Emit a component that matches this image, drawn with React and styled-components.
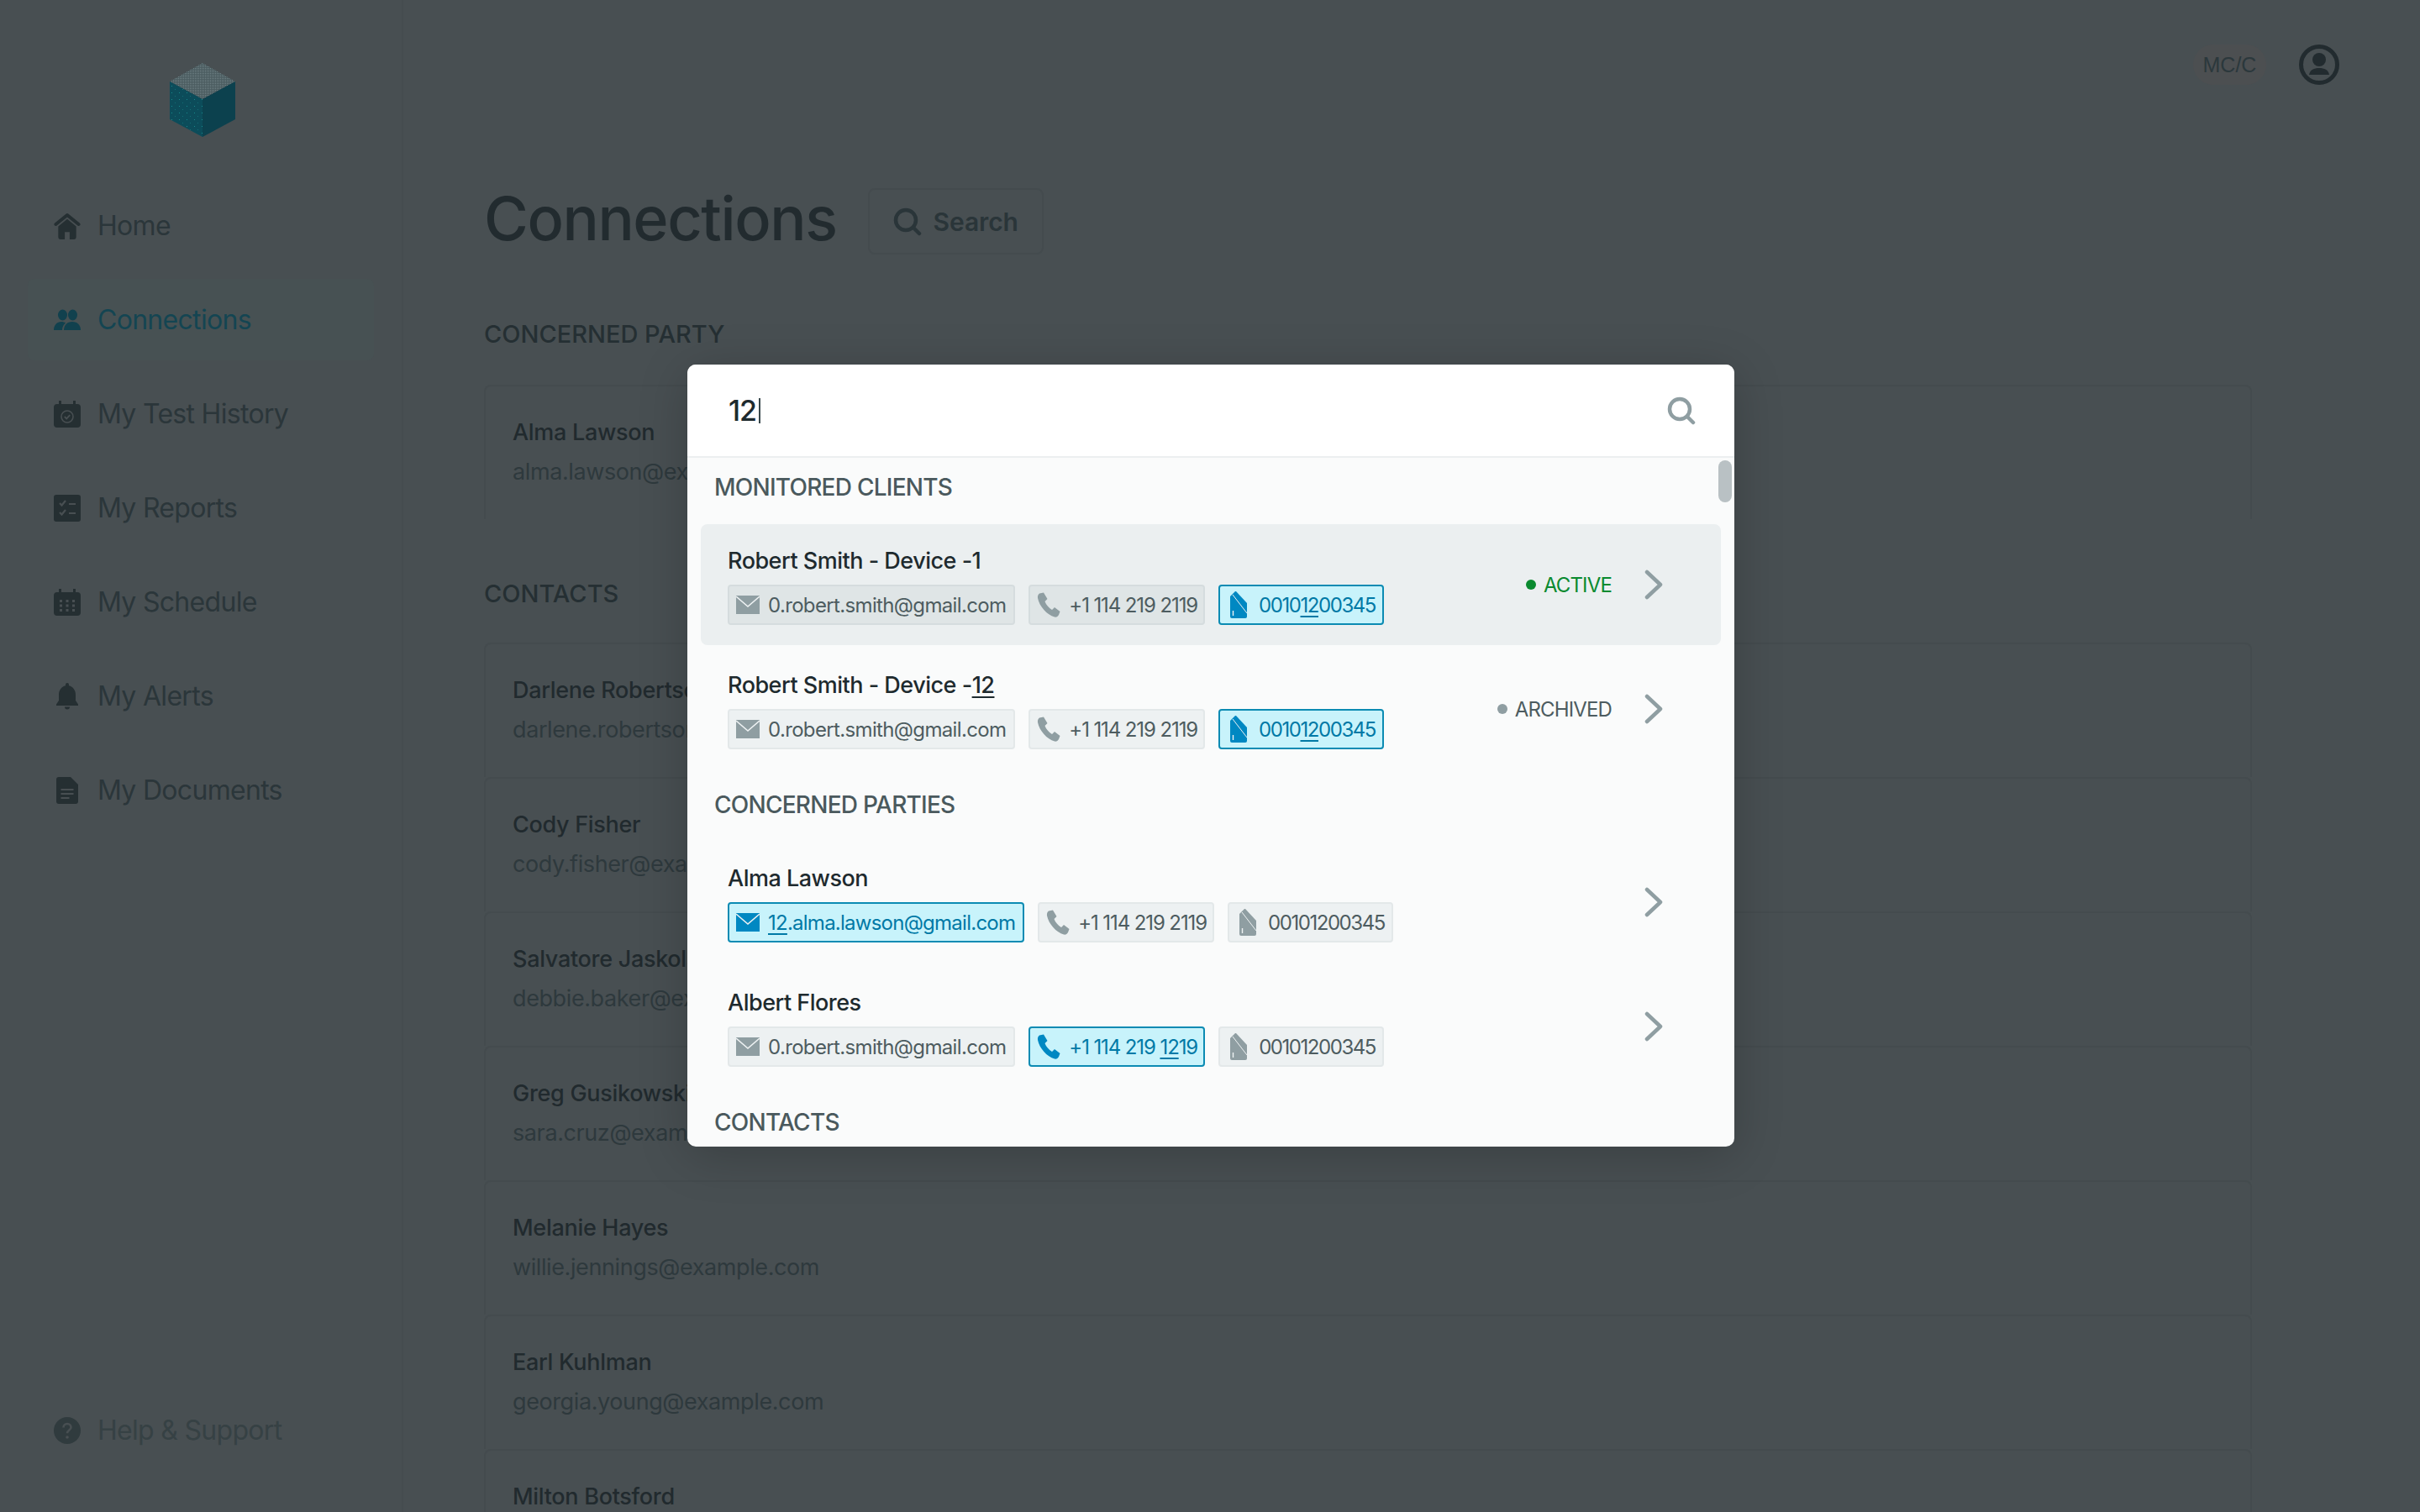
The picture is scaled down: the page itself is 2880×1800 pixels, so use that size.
import React from "react";
import styled, { createGlobalStyle } from "styled-components";

const BG = "#484f52";

const Global = createGlobalStyle`
  html, body { margin: 0; padding: 0; background: ${BG}; }
  * { box-sizing: border-box; }
`;

const Page = styled.div`
  position: relative;
  display: grid;
  grid-template-columns: 480px 1fr;
  grid-template-rows: 1800px;
  width: 2880px;
  height: 1800px;
  overflow: hidden;
  background: ${BG};
  color: #222b2f;
  font-family: Inter, "Liberation Sans", sans-serif;
`;

const Sidebar = styled.aside`
  display: flex;
  flex-direction: column;
  align-items: stretch;
  height: 1800px;
  padding: 75px 33px 49px;
  border-right: 2px solid #454c4f;
`;

const LogoWrap = styled.div`
  display: flex;
  justify-content: center;
  height: 88px;
  padding-left: 3px;
  margin-bottom: 57px;
`;

const Nav = styled.nav`
  display: flex;
  flex-direction: column;
  gap: 15px;
`;

const NavItem = styled.a`
  display: flex;
  align-items: center;
  gap: 20px;
  height: 97px;
  padding-left: 31px;
  border-radius: 8px;
  font-size: 32px;
  letter-spacing: -0.7px;
  color: ${(p) => (p.$active ? "#144552" : "#2b363a")};
  background: ${(p) => (p.$active ? "#475153" : "transparent")};
  svg { width: 32px; height: 32px; flex: none; color: ${(p) => (p.$active ? "#11414e" : "#252f32")}; }
`;

const Help = styled(NavItem)`
  margin-top: auto;
  color: #364144;
  svg { color: #303b3e; }
`;

const Main = styled.main`
  display: flex;
  flex-direction: column;
  min-width: 0;
  height: 1800px;
  overflow: hidden;
`;

const TopBar = styled.header`
  display: flex;
  justify-content: flex-end;
  align-items: center;
  gap: 39px;
  padding: 53px 96px 0 0;
`;

const Pill = styled.span`
  display: flex;
  align-items: center;
  justify-content: center;
  width: 87px;
  height: 48px;
  border-radius: 24px;
  background: #4c4f51;
  font-family: "Liberation Sans", sans-serif;
  font-size: 25px;
  color: #2b383c;
`;

const Content = styled.div`
  display: flex;
  flex-direction: column;
  padding: 123px 200px 0 96px;
`;

const TitleRow = styled.div`
  display: flex;
  align-items: center;
  gap: 37px;
  height: 79px;
  margin-bottom: 77px;
`;

const Title = styled.h1`
  margin: 0 0 8px;
  font-size: 72px;
  font-weight: 500;
  line-height: 79px;
  letter-spacing: -1.4px;
`;

const SearchButton = styled.button`
  display: flex;
  align-items: center;
  gap: 14px;
  height: 79px;
  padding: 0 28px;
  border: 2px solid #444b4e;
  border-radius: 8px;
  background: transparent;
  font: 600 30px Inter, sans-serif;
  letter-spacing: -0.1px;
  color: #2a3539;
  svg { width: 34px; height: 34px; }
`;

const SectionLabel = styled.h2`
  margin: 0 0 ${(p) => p.$after || 42}px;
  font-size: 29px;
  font-weight: 500;
  line-height: 36px;
  color: #252f33;
`;

const Cards = styled.div`
  display: flex;
  flex-direction: column;
  margin-bottom: ${(p) => p.$gap || 0}px;
`;

const Card = styled.div`
  flex: none;
  height: 160px;
  padding: 35px 32px 0;
  border: 2px solid #444b4e;
  border-bottom-width: 0;
  border-radius: 8px 8px 0 0;
`;

const CardName = styled.div`
  font-size: 27px;
  font-weight: 500;
  line-height: 40px;
  letter-spacing: -0.3px;
  color: #212a2e;
`;

const CardEmail = styled.div`
  margin-top: 7px;
  font-size: 27px;
  line-height: 40px;
  letter-spacing: -0.4px;
  color: #2e393d;
`;

const Modal = styled.section`
  position: absolute;
  left: 818px;
  top: 434px;
  width: 1246px;
  height: 931px;
  display: flex;
  flex-direction: column;
  overflow: hidden;
  border-radius: 10px;
  background: #fafbfb;
  box-shadow: 0 10px 60px rgba(0, 0, 0, 0.2);
`;

const SearchBar = styled.div`
  flex: none;
  display: flex;
  align-items: center;
  justify-content: space-between;
  height: 111px;
  padding: 0 46px 0 49px;
  background: #fff;
  border-bottom: 2px solid #eceff0;
`;

const InputText = styled.span`
  display: flex;
  align-items: center;
  gap: 3px;
  font-size: 34px;
  font-weight: 500;
  letter-spacing: -1px;
  color: #1e2a2e;
`;

const Caret = styled.i`
  display: block;
  width: 2px;
  height: 30px;
  background: #39484c;
`;

const Results = styled.div`
  position: relative;
  flex: 1;
  display: flex;
  flex-direction: column;
  padding: 0 16px;
  overflow: hidden;
`;

const Thumb = styled.div`
  position: absolute;
  top: 3px;
  right: 3px;
  width: 16px;
  height: 50px;
  border-radius: 8px;
  background: #b9c1c4;
`;

const Heading = styled.h3`
  margin: ${(p) => (p.$first ? 17 : 24)}px 0 26px;
  padding-left: 16px;
  font-size: 28px;
  font-weight: 500;
  line-height: 36px;
  letter-spacing: -0.75px;
  color: #4a595d;
`;

const Rows = styled.div`
  display: flex;
  flex-direction: column;
  gap: 4px;
`;

const Row = styled.div`
  flex: none;
  display: flex;
  align-items: center;
  height: 144px;
  padding: 0 68px 0 32px;
  border-radius: 8px;
  background: ${(p) => (p.$hover ? "#ebeff0" : "transparent")};
`;

const RowBody = styled.div`
  flex: 1;
  min-width: 0;
`;

const Name = styled.div`
  font-size: 27px;
  font-weight: 500;
  line-height: 40px;
  letter-spacing: -0.5px;
  color: #1e2a2e;
  u { text-underline-offset: 4px; }
`;

const Chips = styled.div`
  display: flex;
  gap: 16px;
  margin-top: 8px;
`;

const Chip = styled.span`
  display: flex;
  align-items: center;
  gap: 10px;
  height: 48px;
  padding: 0 9px 0 8px;
  border-radius: 4px;
  border: 2px solid ${(p) => (p.$hit ? "#0b8bb3" : p.$hover ? "#d5dcde" : "#e3e8e9")};
  background: ${(p) => (p.$hit ? "#c8f3fb" : p.$hover ? "#dfe5e6" : "#edf1f2")};
  color: ${(p) => (p.$hit ? "#0079a6" : "#4d5c60")};
  font-size: 24px;
  letter-spacing: ${(p) => (p.$hit ? "-0.75px" : "-0.65px")};
  white-space: nowrap;
  u { text-underline-offset: 4px; text-decoration-thickness: 1.5px; }
  svg { flex: none; color: ${(p) => (p.$hit ? "#0088c2" : "#8f9ea2")}; }
`;

const PhoneChip = styled(Chip)`
  gap: 10px;
  padding-right: 7px;
  letter-spacing: -1.1px;
`;

const SimChip = styled(Chip)`
  gap: 14px;
  padding-left: 12px;
  padding-right: 8px;
  letter-spacing: -1.45px;
`;

const Status = styled.span`
  display: flex;
  align-items: center;
  gap: 9px;
  margin-right: 38px;
  font-size: 24px;
  letter-spacing: -0.85px;
  color: ${(p) => (p.$active ? "#0a8a2f" : "#4d5c60")};
  &::before {
    content: "";
    width: 12px;
    height: 12px;
    border-radius: 50%;
    background: ${(p) => (p.$active ? "#0a8a2f" : "#8f9ea2")};
  }
`;

const Cube = () => (
  <svg width="78" height="88" viewBox="0 0 78 88">
    <defs>
      <pattern id="dotsL" width="9" height="8" patternUnits="userSpaceOnUse">
        <rect width="1" height="1" x="2" y="3" fill="#178a8c" />
        <rect width="1" height="1" x="6" y="7" fill="#126f76" />
      </pattern>
      <pattern id="dotsT" width="2" height="2" patternUnits="userSpaceOnUse">
        <rect width="1" height="1" fill="#728488" />
      </pattern>
    </defs>
    <polygon points="39,0 78,22 39,43 0,22" fill="#4b5c60" />
    <polygon points="39,0 78,22 39,43 0,22" fill="url(#dotsT)" />
    <polygon points="0,22 39,43 39,88 0,67" fill="#0c4c5a" />
    <polygon points="0,22 39,43 39,88 0,67" fill="url(#dotsL)" />
    <polygon points="78,22 39,43 39,88 78,67" fill="#0c414e" />
  </svg>
);

const HomeIcon = () => (
  <svg viewBox="0 0 32 33" fill="currentColor">
    <path d="M5 17L16 8l11 9v13a3 3 0 0 1-3 3h-5v-9h-6v9H8a3 3 0 0 1-3-3z" />
    <path d="M2 14.5L16 3l14 11.5" fill="none" stroke="currentColor" strokeWidth="4" strokeLinecap="round" strokeLinejoin="round" />
  </svg>
);

const PeopleIcon = () => (
  <svg viewBox="0 0 32 32" fill="currentColor">
    <ellipse cx="10.5" cy="10" rx="5.5" ry="6.5" />
    <ellipse cx="22.5" cy="10" rx="5.5" ry="6.5" />
    <path d="M0 28c0-6 4-10 9-10 2 0 3.5.5 5 1.5-2.5 2-4 5-4 8.5z" />
    <path d="M12 28c0-6 4-10 10-10s10 4 10 10z" />
  </svg>
);

const CalendarCheck = () => (
  <svg viewBox="0 0 32 32" fill="currentColor">
    <path d="M6 0h3v4h14V0h3v4h2a4 4 0 0 1 4 4v20a4 4 0 0 1-4 4H4a4 4 0 0 1-4-4V8a4 4 0 0 1 4-4h2z" />
    <circle cx="16" cy="19" r="7" fill="none" stroke={BG} strokeWidth="1.6" />
    <path d="M12.8 19l2.4 2.4 4-4.2" fill="none" stroke={BG} strokeWidth="1.8" />
  </svg>
);

const Checklist = () => (
  <svg viewBox="0 0 32 32">
    <rect width="32" height="32" rx="3" fill="currentColor" />
    <path d="M7 10l2.5 2.5L14 7M7 21l2.5 2.5L14 18M18 11h8M18 22h8" fill="none" stroke={BG} strokeWidth="2.2" />
  </svg>
);

const CalendarGrid = () => (
  <svg viewBox="0 0 32 32" fill="currentColor">
    <path d="M6 0h3v4h14V0h3v4h2a4 4 0 0 1 4 4v20a4 4 0 0 1-4 4H4a4 4 0 0 1-4-4V8a4 4 0 0 1 4-4h2z" />
    <path d="M7 13h3v3H7zM14.5 13h3v3h-3zM22 13h3v3h-3zM7 18.5h3v3H7zM14.5 18.5h3v3h-3zM22 18.5h3v3h-3zM7 24h3v3H7zM14.5 24h3v3h-3zM22 24h3v3h-3z" fill={BG} />
  </svg>
);

const BellIcon = () => (
  <svg viewBox="0 0 32 32" fill="currentColor">
    <path d="M16 0a2 2 0 0 1 2 2v1.3C23 4.5 26 9 26 14v7l3 4.5V27H3v-1.5L6 21v-7C6 9 9 4.5 14 3.3V2a2 2 0 0 1 2-2z" />
    <path d="M13 28.5h6a3 3 0 0 1-6 0z" />
  </svg>
);

const DocIcon = () => (
  <svg viewBox="0 0 32 32" fill="currentColor">
    <path d="M6 0h14l9 9v20a3 3 0 0 1-3 3H6a3 3 0 0 1-3-3V3a3 3 0 0 1 3-3z" />
    <path d="M8.5 15h15M8.5 20h15M8.5 25h10" stroke={BG} strokeWidth="2" fill="none" />
  </svg>
);

const HelpIcon = () => (
  <svg viewBox="0 0 32 32">
    <circle cx="16" cy="16" r="16" fill="currentColor" />
    <path d="M11.5 12.5c0-2.8 2-4.5 4.5-4.5s4.5 1.7 4.5 4.2c0 3.3-4.5 3.3-4.5 7" fill="none" stroke={BG} strokeWidth="2.6" />
    <circle cx="16" cy="24" r="1.8" fill={BG} />
  </svg>
);

const SearchIcon = ({ color = "currentColor", size = 34 }) => (
  <svg width={size} height={size} viewBox="0 0 34 34" fill="none" stroke={color} strokeWidth="4.5" strokeLinecap="round">
    <circle cx="15" cy="15" r="12" />
    <path d="M24 24l7 7" />
  </svg>
);

const UserIcon = () => (
  <svg width="48" height="48" viewBox="0 0 48 48">
    <circle cx="24" cy="24" r="21.5" fill="none" stroke="#222b2f" strokeWidth="5" />
    <circle cx="24" cy="18" r="8" fill="#222b2f" />
    <path d="M12 36c1-6 6-8 12-8s11 2 12 8z" fill="#222b2f" />
  </svg>
);

const MailIcon = () => (
  <svg width="28" height="22" viewBox="0 0 28 22">
    <path d="M0 0h28v22H0z" fill="currentColor" />
    <path d="M0 1l14 12L28 1" fill="none" stroke="#eef2f3" strokeWidth="1.6" />
  </svg>
);

const PhoneIcon = () => (
  <svg width="28" height="30" viewBox="0 0 28 30">
    <path
      d="M3 1.5L8 .5l4.5 7.5-3 3c1.5 4 4.5 7.5 8.5 10l3-3 6.5 5-1.5 4c-1 2-3 3-5 2.5C12 27 3 17 1 7c-.3-2.500.5-4.500 2-5.500z"
      fill="currentColor"
    />
  </svg>
);

const SimIcon = () => (
  <svg width="20" height="32" viewBox="0 0 20 32">
    <path d="M6 0h1l13 14v16a2 2 0 0 1-2 2H2a2 2 0 0 1-2-2V6z" fill="currentColor" />
    <path d="M3 4l17 22" stroke="#eef2f3" strokeWidth="1" />
    <path d="M3.5 23v6" stroke="#eef2f3" strokeWidth="1.4" />
  </svg>
);

const Chevron = () => (
  <svg width="24" height="36" viewBox="0 0 24 36" fill="none" stroke="#8f9ea2" strokeWidth="4.5" strokeLinecap="round" strokeLinejoin="round">
    <path d="M4 3l16 15L4 33" />
  </svg>
);

const Email = ({ hit, hover, children }) => (
  <Chip $hit={hit} $hover={hover}>
    <MailIcon />
    <span>{children}</span>
  </Chip>
);
const Phone = ({ hit, hover, children }) => (
  <PhoneChip $hit={hit} $hover={hover}>
    <PhoneIcon />
    <span>{children}</span>
  </PhoneChip>
);
const Sim = ({ hit, hover, children }) => (
  <SimChip $hit={hit} $hover={hover}>
    <SimIcon />
    <span>{children}</span>
  </SimChip>
);

const navItems = [
  ["Home", <HomeIcon key="i" />],
  ["Connections", <PeopleIcon key="i" />, true],
  ["My Test History", <CalendarCheck key="i" />],
  ["My Reports", <Checklist key="i" />],
  ["My Schedule", <CalendarGrid key="i" />],
  ["My Alerts", <BellIcon key="i" />],
  ["My Documents", <DocIcon key="i" />],
];

const contacts = [
  ["Darlene Robertson", "darlene.robertson@example.com"],
  ["Cody Fisher", "cody.fisher@example.com"],
  ["Salvatore Jaskolski", "debbie.baker@example.com"],
  ["Greg Gusikowski", "sara.cruz@example.com"],
  ["Melanie Hayes", "willie.jennings@example.com"],
  ["Earl Kuhlman", "georgia.young@example.com"],
  ["Milton Botsford", "milton.botsford@example.com"],
];

export default function App() {
  return (
    <Page>
      <Global />
      <Sidebar>
        <LogoWrap>
          <Cube />
        </LogoWrap>
        <Nav>
          {navItems.map(([label, icon, active]) => (
            <NavItem key={label} $active={active}>
              {icon}
              {label}
            </NavItem>
          ))}
        </Nav>
        <Help>
          <HelpIcon />
          Help &amp; Support
        </Help>
      </Sidebar>
      <Main>
        <TopBar>
          <Pill>MC/C</Pill>
          <UserIcon />
        </TopBar>
        <Content>
          <TitleRow>
            <Title>Connections</Title>
            <SearchButton>
              <SearchIcon />
              Search
            </SearchButton>
          </TitleRow>
          <SectionLabel>CONCERNED PARTY</SectionLabel>
          <Cards $gap={71}>
            <Card>
              <CardName>Alma Lawson</CardName>
              <CardEmail>alma.lawson@example.com</CardEmail>
            </Card>
          </Cards>
          <SectionLabel $after={40}>CONTACTS</SectionLabel>
          <Cards>
            {contacts.map(([n, e]) => (
              <Card key={n}>
                <CardName>{n}</CardName>
                <CardEmail>{e}</CardEmail>
              </Card>
            ))}
          </Cards>
        </Content>
      </Main>
      <Modal>
        <SearchBar>
          <InputText>
            12
            <Caret />
          </InputText>
          <SearchIcon color="#8f9ea2" />
        </SearchBar>
        <Results>
          <Thumb />
          <Heading $first>MONITORED CLIENTS</Heading>
          <Rows>
            <Row $hover>
              <RowBody>
                <Name>Robert Smith - Device -1</Name>
                <Chips>
                  <Email hover>0.robert.smith@gmail.com</Email>
                  <Phone hover>+1 114 219 2119</Phone>
                  <Sim hit>
                    0010<u>12</u>00345
                  </Sim>
                </Chips>
              </RowBody>
              <Status $active>ACTIVE</Status>
              <Chevron />
            </Row>
            <Row>
              <RowBody>
                <Name>
                  Robert Smith - Device -<u>12</u>
                </Name>
                <Chips>
                  <Email>0.robert.smith@gmail.com</Email>
                  <Phone>+1 114 219 2119</Phone>
                  <Sim hit>
                    0010<u>12</u>00345
                  </Sim>
                </Chips>
              </RowBody>
              <Status>ARCHIVED</Status>
              <Chevron />
            </Row>
          </Rows>
          <Heading>CONCERNED PARTIES</Heading>
          <Rows>
            <Row>
              <RowBody>
                <Name>Alma Lawson</Name>
                <Chips>
                  <Email hit>
                    <u>12</u>.alma.lawson@gmail.com
                  </Email>
                  <Phone>+1 114 219 2119</Phone>
                  <Sim>00101200345</Sim>
                </Chips>
              </RowBody>
              <Chevron />
            </Row>
            <Row>
              <RowBody>
                <Name>Albert Flores</Name>
                <Chips>
                  <Email>0.robert.smith@gmail.com</Email>
                  <Phone hit>
                    +1 114 219 <u>12</u>19
                  </Phone>
                  <Sim>00101200345</Sim>
                </Chips>
              </RowBody>
              <Chevron />
            </Row>
          </Rows>
          <Heading>CONTACTS</Heading>
        </Results>
      </Modal>
    </Page>
  );
}
